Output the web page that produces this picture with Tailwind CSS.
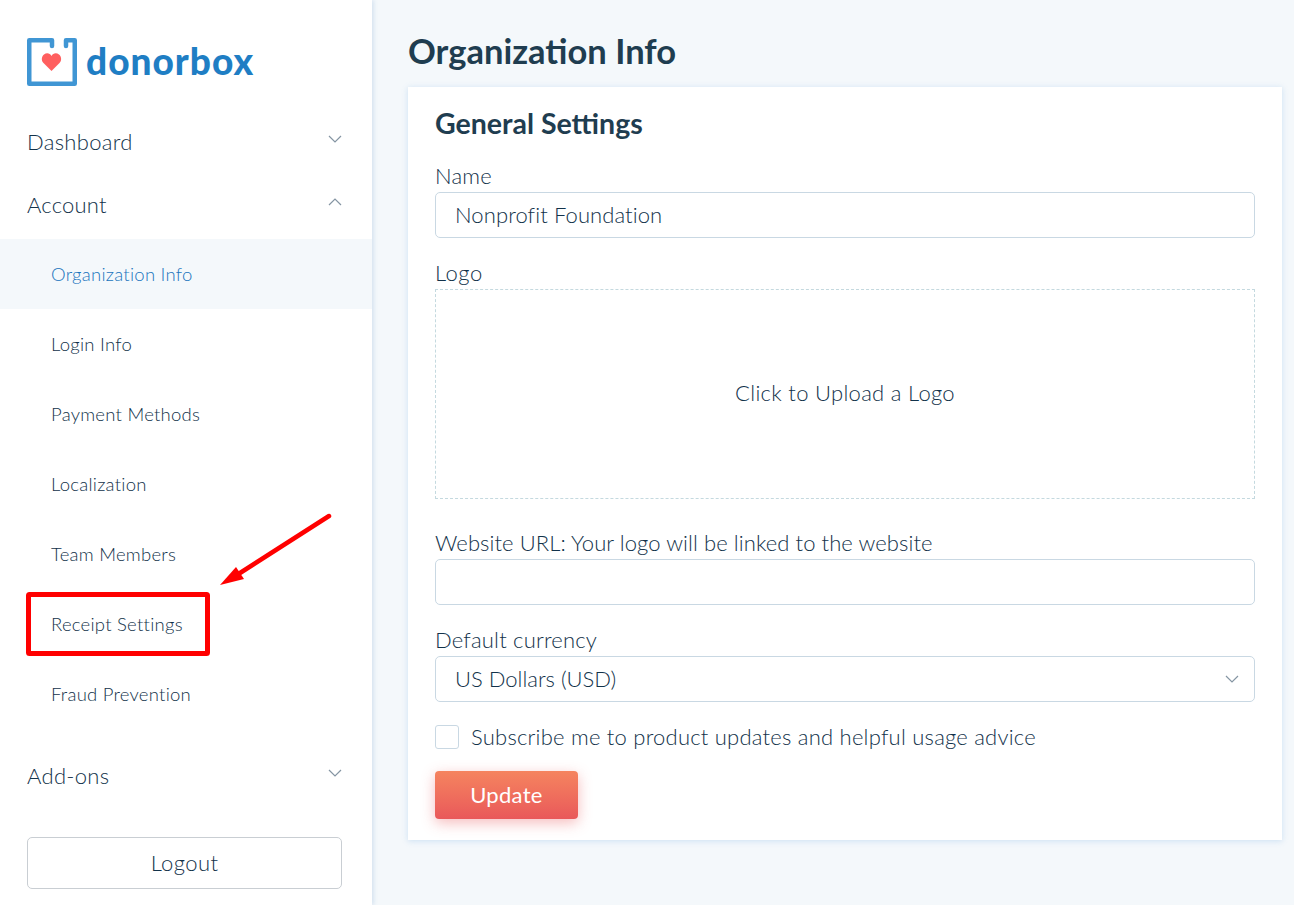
<!DOCTYPE html>
<html lang="en">
<head>
<meta charset="utf-8">
<title>Organization Info</title>
<script src="https://cdn.jsdelivr.net/npm/@tailwindcss/browser@4"></script>
</head>
<body class="m-0 overflow-hidden bg-[#f4f8fb] font-['Lato','Liberation_Sans',sans-serif] font-light text-[#12324a]">
<div class="relative flex h-[905px] w-[1294px]">
  <aside class="flex h-full w-[372px] shrink-0 flex-col bg-white shadow-[2px_0_4px_rgba(100,150,200,0.2)]">
    <div class="ml-[27px] mt-[38px] flex h-[48px] items-center gap-[9px]">
      <svg width="50" height="48" viewBox="0 0 50 48" fill="none" class="shrink-0">
        <path d="M25 8V2.250H2.250V45.750H47.750V2.250H39V8" stroke="#4096d4" stroke-width="4.500" stroke-linejoin="round" stroke-linecap="round"/>
        <path d="M24.500 33L16.500 25C14 22.500 14.500 18.500 17 16.500C19.500 14.500 23 15 24.500 18C26 15 29.500 14.500 32 16.500C34.500 18.500 35 22.500 32.500 25Z" fill="#ff5f5f"/>
      </svg>
      <span class="-mt-[4px] text-[37px] font-black leading-none tracking-[1px] text-[#1f7ec4]">donorbox</span>
    </div>
    <div class="mt-[26px] flex h-[58px] items-center justify-between pl-[27px] pr-[30px] text-[22px] tracking-[0.3px]">
      <span>Dashboard</span>
      <svg width="14" height="8" viewBox="0 0 14 8" fill="none" class="-mt-[4px]"><path d="M1 1L7 7L13 1" stroke="#8595a3" stroke-width="1.200"/></svg>
    </div>
    <div class="mt-[5px] flex h-[58px] items-center justify-between pl-[27px] pr-[30px] text-[22px] tracking-[0.2px]">
      <span>Account</span>
      <svg width="14" height="8" viewBox="0 0 14 8" fill="none" class="-mt-[4px]"><path d="M1 7L7 1L13 7" stroke="#8595a3" stroke-width="1.200"/></svg>
    </div>
    <nav class="mt-[6px] flex flex-col text-[18.500px] tracking-[0.25px]">
      <a class="flex h-[70px] items-center bg-[#f4f8fb] pl-[51px] pt-[2px] text-[#1a74bd]">Organization Info</a>
      <a class="flex h-[70px] items-center pl-[51px] pt-[2px]">Login Info</a>
      <a class="flex h-[70px] items-center pl-[51px] pt-[2px]">Payment Methods</a>
      <a class="flex h-[70px] items-center pl-[51px] pt-[2px]">Localization</a>
      <a class="flex h-[70px] items-center pl-[51px] pt-[2px]">Team Members</a>
      <a class="flex h-[70px] items-center pl-[51px] pt-[2px]">Receipt Settings</a>
      <a class="flex h-[70px] items-center pl-[51px] pt-[2px]">Fraud Prevention</a>
    </nav>
    <div class="mt-[17px] flex h-[58px] items-center justify-between pl-[27px] pr-[30px] text-[22px] tracking-[0.3px]">
      <span>Add-ons</span>
      <svg width="14" height="8" viewBox="0 0 14 8" fill="none" class="-mt-[4px]"><path d="M1 1L7 7L13 1" stroke="#8595a3" stroke-width="1.200"/></svg>
    </div>
    <button class="ml-[27px] mt-[33px] h-[52px] w-[315px] rounded-[5px] border border-[#c9ced3] bg-white pb-[2px] text-[22px] tracking-[0.4px] text-[#12324a]">Logout</button>
  </aside>

  <main class="ml-[36px] w-[874px]">
    <h1 class="mt-[29px] h-[44px] text-[34.500px] font-bold leading-[44px] text-[#1f3d50]">Organization Info</h1>
    <section class="mt-[14px] h-[753px] bg-white px-[27px] pt-[16px] tracking-[0.2px] shadow-[0_1px_6px_rgba(110,170,225,0.3)]">
      <h2 class="h-[40px] text-[28.500px] font-bold leading-[40px] tracking-normal text-[#1f3d50]">General Settings</h2>
      <label class="mt-[17px] block h-[32px] text-[22px] leading-[32px]">Name</label>
      <div class="flex h-[46px] items-center rounded-[5px] border border-[#c9d8e3] pb-[2px] pl-[19px] text-[22px] tracking-[0.1px]">Nonprofit Foundation</div>
      <label class="mt-[19px] block h-[32px] text-[22px] leading-[32px] tracking-[0.5px]">Logo</label>
      <div class="flex h-[210px] items-center justify-center border border-dashed border-[#c4d9df] pb-[4px] text-[22px] tracking-[0.3px]">Click to Upload a Logo</div>
      <label class="mt-[28px] block h-[32px] text-[22px] leading-[32px] tracking-[0.08px]">Website URL: Your logo will be linked to the website</label>
      <div class="h-[46px] rounded-[5px] border border-[#c9d8e3]"></div>
      <label class="mt-[19px] block h-[32px] text-[22px] leading-[32px]">Default currency</label>
      <div class="flex h-[46px] items-center justify-between rounded-[5px] border border-[#c9d8e3] pl-[19px] pr-[15px] text-[22px] tracking-normal">
        <span class="-mt-[2px]">US Dollars (USD)</span>
        <svg width="14" height="8" viewBox="0 0 14 8" fill="none"><path d="M1 1L7 7L13 1" stroke="#8595a3" stroke-width="1.200"/></svg>
      </div>
      <div class="mt-[23px] flex h-[24px] items-center gap-[12px] text-[22px] tracking-[0.23px]">
        <span class="h-[24px] w-[24px] rounded-[3px] border border-[#c9d8e3] bg-white"></span>
        <span class="-mt-[2px]">Subscribe me to product updates and helpful usage advice</span>
      </div>
      <button class="mt-[22px] h-[48px] w-[143px] rounded-[4px] bg-gradient-to-b from-[#f5845f] to-[#e9585a] pb-[2px] text-[22px] font-normal tracking-[0.3px] text-white shadow-[0_4px_14px_rgba(233,88,90,0.4)]">Update</button>
    </section>
  </main>

  <svg class="pointer-events-none absolute left-0 top-0" width="1294" height="905" fill="none">
    <rect x="28.500" y="594.500" width="179" height="59" rx="1" stroke="#ff0000" stroke-width="5"/>
    <path d="M329 516L240 573" stroke="#ff0000" stroke-width="4.500" stroke-linecap="round"/>
    <path d="M220 585L236 567L244 579Z" fill="#ff0000"/>
  </svg>
</div>
</body>
</html>
